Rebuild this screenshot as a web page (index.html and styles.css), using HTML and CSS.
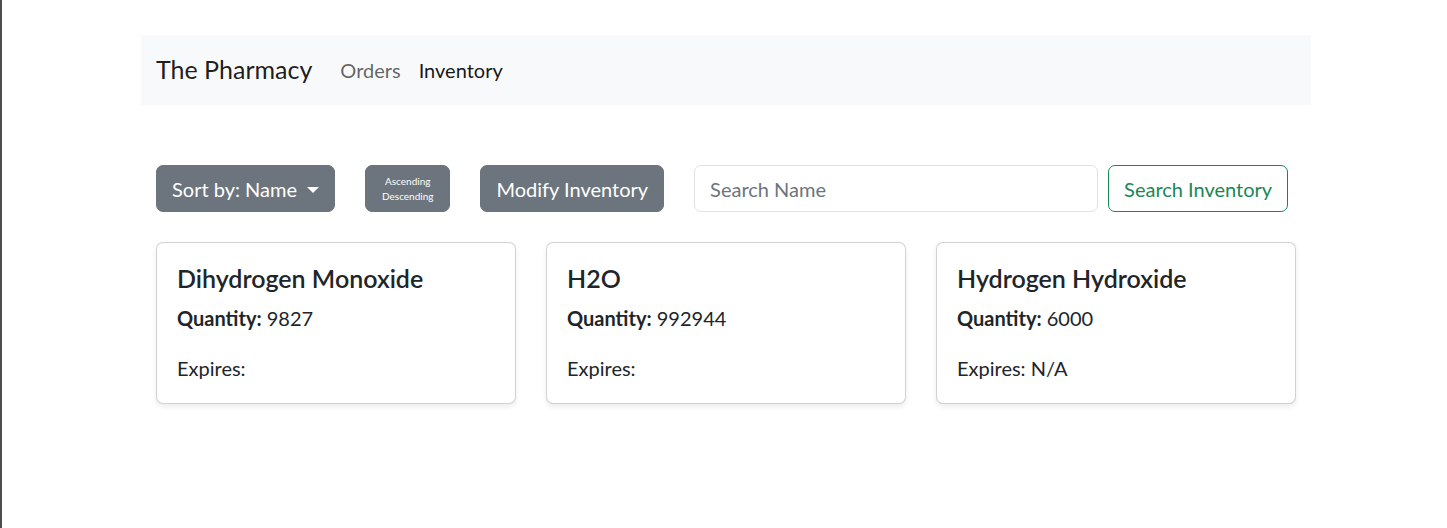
FILE: index.html
```html
<!DOCTYPE html>
<html lang="en">
<head>
<meta charset="utf-8">
<title>The Pharmacy</title>
<link rel="stylesheet" href="styles.css">
</head>
<body>
<div class="page">
  <div class="container">
    <nav class="navbar">
      <a class="brand" href="#">The Pharmacy</a>
      <a class="nav-link" href="#">Orders</a>
      <a class="nav-link active" href="#">Inventory</a>
    </nav>

    <div class="toolbar">
      <button class="btn btn-secondary dropdown-toggle">Sort by: Name</button>
      <button class="btn btn-secondary btn-order">Ascending<br>Descending</button>
      <button class="btn btn-secondary">Modify Inventory</button>
      <input class="search-input" type="text" placeholder="Search Name">
      <button class="btn btn-outline-success">Search Inventory</button>
    </div>

    <div class="cards">
      <div class="card">
        <h5 class="card-title">Dihydrogen Monoxide</h5>
        <p class="card-qty"><b>Quantity:</b> 9827</p>
        <p class="card-exp">Expires: </p>
      </div>
      <div class="card">
        <h5 class="card-title">H2O</h5>
        <p class="card-qty"><b>Quantity:</b> 992944</p>
        <p class="card-exp">Expires: </p>
      </div>
      <div class="card">
        <h5 class="card-title">Hydrogen Hydroxide</h5>
        <p class="card-qty"><b>Quantity:</b> 6000</p>
        <p class="card-exp">Expires: N/A</p>
      </div>
    </div>
  </div>
</div>
</body>
</html>
```
FILE: styles.css
```css
* { box-sizing: border-box; }

html, body {
  margin: 0;
  padding: 0;
  background: #fff;
}

body {
  font-family: Lato, "Noto Sans", sans-serif;
  font-size: 20px;
  line-height: 1.5;
  color: #212529;
}

.page {
  border-left: 2px solid #4d4d4d;
  min-height: 528px;
}

.container {
  width: 1170px;
  margin-left: 139px;
  padding-top: 35px;
}

.navbar {
  display: flex;
  align-items: center;
  height: 70px;
  padding: 10px 15px;
  background: #f8f9fa;
}

.navbar a {
  text-decoration: none;
}

.brand {
  font-size: 25px;
  line-height: 37.5px;
  color: rgba(0, 0, 0, 0.9);
  margin-right: 19px;
}

.nav-link {
  padding: 10px 9px;
  color: rgba(0, 0, 0, 0.62);
}

.nav-link.active {
  color: rgba(0, 0, 0, 0.92);
}

.toolbar {
  display: flex;
  align-items: center;
  margin-top: 60px;
  padding-left: 15px;
}

.btn {
  font-family: inherit;
  font-size: 20px;
  line-height: 30px;
  padding: 7px 15px;
  border-radius: 7px;
  border: 1px solid transparent;
  height: 47px;
  cursor: pointer;
  white-space: nowrap;
}

.btn-secondary {
  background: #6c757d;
  border-color: #6c757d;
  color: #fff;
  margin-right: 30px;
}

.dropdown-toggle::after {
  content: "";
  display: inline-block;
  margin-left: 10px;
  vertical-align: 4px;
  border-top: 6px solid #fff;
  border-left: 6px solid transparent;
  border-right: 6px solid transparent;
}

.btn-order {
  font-size: 10px;
  line-height: 15px;
  padding: 7px 16px;
}

.search-input {
  width: 404px;
  height: 47px;
  font-family: inherit;
  font-size: 20px;
  padding: 7px 15px;
  border: 1px solid #dee2e6;
  border-radius: 7px;
  color: #212529;
  margin-right: 10px;
  outline: none;
}

.search-input::placeholder {
  color: #6c757d;
}

.btn-outline-success {
  background: #fff;
  border-color: #198754;
  color: #198754;
}

.cards {
  display: grid;
  grid-template-columns: repeat(3, 360px);
  column-gap: 30px;
  margin-top: 30px;
  padding-left: 15px;
}

.card {
  border: 1px solid rgba(0, 0, 0, 0.175);
  border-radius: 7px;
  padding: 20px;
  box-shadow: 0 2.5px 5px rgba(0, 0, 0, 0.075);
  background: #fff;
}

.card-title {
  margin: 0 0 10px;
  font-size: 25px;
  font-weight: 600;
  line-height: 30px;
}

.card-qty {
  margin: 0 0 20px;
}

.card-exp {
  margin: 0;
}
```
